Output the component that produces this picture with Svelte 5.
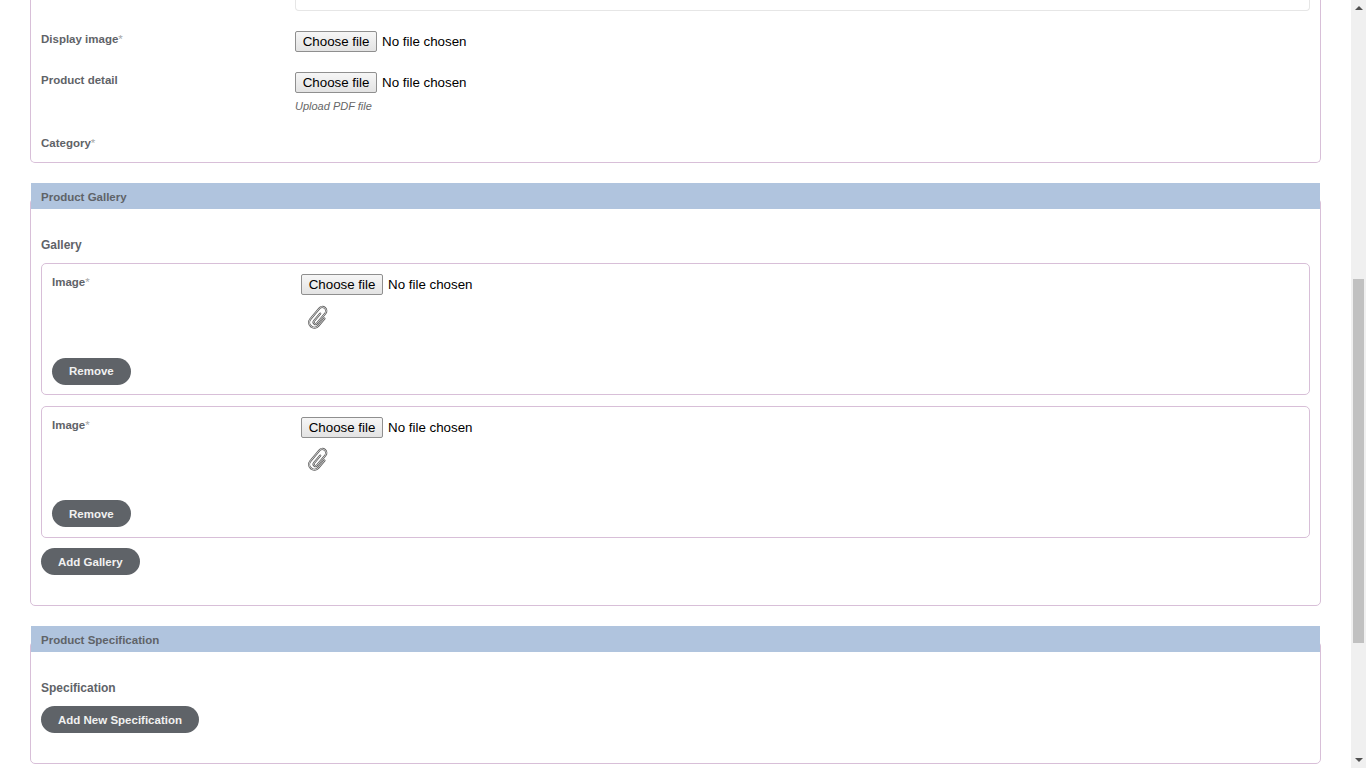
<script>
  let galleries = [1, 2];
</script>

{#snippet fileInput()}
  <label class="file">
    <input type="file" hidden />
    <span class="file-btn">Choose file</span>
    <span class="file-name">No file chosen</span>
  </label>
{/snippet}

<div class="page">
  <div class="content">
    <section class="panel first">
      <div class="editor"></div>

      <div class="row display-row">
        <div class="label">Display image<span class="req">*</span></div>
        <div class="field">{@render fileInput()}</div>
      </div>

      <div class="row detail-row">
        <div class="label">Product detail</div>
        <div class="field">
          {@render fileInput()}
          <p class="hint">Upload PDF file</p>
        </div>
      </div>

      <div class="row category-row">
        <div class="label">Category<span class="req">*</span></div>
      </div>
    </section>

    <section class="group">
      <h3 class="head">Product Gallery</h3>
      <div class="panel body">
        <div class="title">Gallery</div>
        {#each galleries as g}
          <div class="item">
            <div class="item-row">
              <div class="label">Image<span class="req">*</span></div>
              <div class="item-field">
                {@render fileInput()}
                <svg class="clip" width="24" height="24" viewBox="0 0 24 24" fill="none">
                  <g transform="rotate(40 12 12)" stroke-linecap="round">
                    <path d="M11.500 8V17.500A1.900 1.900 0 0 0 15.300 17.500V4.500A3.600 3.600 0 0 0 7.500 4.500V18.500A5.200 5.200 0 0 0 17.900 18.500V9" stroke="#5c5c5c" stroke-width="2.200" />
                    <path d="M11.500 8V17.500A1.900 1.900 0 0 0 15.300 17.500V4.500A3.600 3.600 0 0 0 7.500 4.500V18.500A5.200 5.200 0 0 0 17.900 18.500V9" stroke="#dcdcdc" stroke-width="0.800" />
                  </g>
                </svg>
              </div>
            </div>
            <button class="pill" type="button">Remove</button>
          </div>
        {/each}
        <button class="pill add" type="button">Add Gallery</button>
      </div>
    </section>

    <section class="group">
      <h3 class="head">Product Specification</h3>
      <div class="panel body">
        <div class="title">Specification</div>
        <button class="pill add" type="button">Add New Specification</button>
      </div>
    </section>
  </div>

  <div class="scrollbar" aria-hidden="true">
    <span class="arrow up"></span>
    <div class="track"><div class="thumb"></div></div>
    <span class="arrow down"></span>
  </div>
</div>

<style>
  :global(body) {
    margin: 0;
    background: #fff;
    font-family: "Liberation Sans", Arial, sans-serif;
  }

  .page {
    display: flex;
    height: 768px;
    overflow: hidden;
  }

  .content {
    flex: 1;
    padding: 0 30px;
    min-width: 0;
  }

  .scrollbar {
    width: 15px;
    background: #f0f0f0;
    display: flex;
    flex-direction: column;
    align-items: center;
  }

  .track {
    flex: 1;
    width: 100%;
    padding-top: 264px;
    box-sizing: border-box;
  }

  .thumb {
    width: 11px;
    margin-left: 2px;
    height: 364px;
    background: #c1c1c1;
  }

  .arrow {
    display: block;
    width: 0;
    height: 0;
    border-left: 4px solid transparent;
    border-right: 4px solid transparent;
  }

  .arrow.up {
    margin: 6px 0 5px;
    border-bottom: 4px solid #505050;
  }

  .arrow.down {
    margin: 5px 0 6px;
    border-top: 4px solid #505050;
  }

  .panel {
    border: 1px solid thistle;
    border-radius: 5px;
    background: #fff;
  }

  .first {
    border-top: 0;
    border-top-left-radius: 0;
    border-top-right-radius: 0;
    padding: 0 10px;
    height: 162px;
  }

  .editor {
    height: 10px;
    border: 1px solid #e6e6e6;
    border-top: 0;
    border-radius: 0 0 4px 4px;
    margin-left: 254px;
  }

  .row {
    display: flex;
  }

  .display-row {
    margin-top: 20px;
  }

  .detail-row {
    margin-top: 20px;
  }

  .category-row {
    margin-top: 22px;
  }

  .label {
    width: 254px;
    flex: none;
    font-size: 11.5px;
    font-weight: bold;
    color: #5f6368;
    line-height: 16px;
  }

  .req {
    color: #a8a8a8;
    font-weight: normal;
  }

  .field {
    display: flex;
    flex-direction: column;
    align-items: flex-start;
  }

  .file {
    display: flex;
    align-items: center;
    gap: 5px;
    font-size: 13.33px;
    color: #000;
  }

  .file-btn {
    box-sizing: border-box;
    height: 21px;
    line-height: 19px;
    padding: 0 6.7px;
    border: 1px solid #8f8f8f;
    border-radius: 2px;
    background: linear-gradient(#f6f6f6, #e3e3e3);
  }

  .hint {
    margin: 6px 0 0;
    font-size: 11px;
    font-style: italic;
    color: #666;
    line-height: 14px;
  }

  .group {
    margin-top: 20px;
  }

  .head {
    position: relative;
    margin: 0 1px -11px;
    height: 26px;
    line-height: 28px;
    padding-left: 10px;
    background: lightsteelblue;
    color: #5f6368;
    font-size: 11.5px;
    font-weight: bold;
  }

  .body {
    padding: 38px 10px 30px;
  }

  .title {
    font-size: 12px;
    font-weight: bold;
    color: #5f6368;
    line-height: 16px;
    margin-bottom: 10px;
  }

  .item {
    border: 1px solid thistle;
    border-radius: 5px;
    padding: 10px;
    margin-bottom: 10.25px;
    height: 110.25px;
  }

  .item-row {
    display: flex;
    height: 83.9px;
  }

  .item-field {
    display: flex;
    flex-direction: column;
    align-items: flex-start;
    margin-left: -5px;
  }

  .clip {
    margin: 9.75px 0 0 5px;
    overflow: visible;
  }

  .pill {
    display: block;
    height: 27px;
    padding: 0 17px;
    border: 0;
    border-radius: 14px;
    background: #5f6368;
    color: #f1f1f1;
    font-family: "Liberation Sans", Arial, sans-serif;
    font-size: 11.5px;
    font-weight: bold;
  }
</style>
